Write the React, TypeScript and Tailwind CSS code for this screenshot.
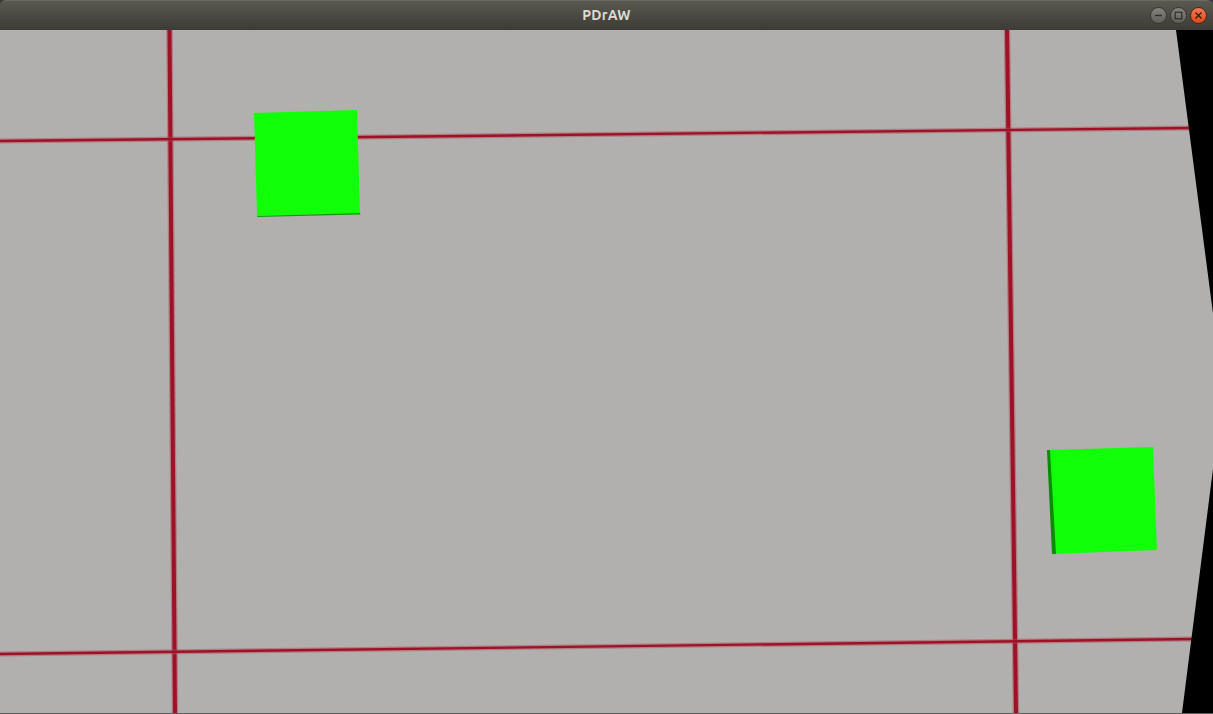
import React from 'react';

const WindowButton: React.FC<{ kind: 'min' | 'max' | 'close' }> = ({ kind }) => {
  const close = kind === 'close';
  return (
    <div
      className={
        close
          ? 'w-[17px] h-[17px] rounded-full flex items-center justify-center bg-gradient-to-b from-[#f37a4e] to-[#dd4814] border border-[#3a2a20]'
          : 'w-[17px] h-[17px] rounded-full flex items-center justify-center bg-gradient-to-b from-[#85847f] to-[#5f5e59] border border-[#36352f]'
      }
    >
      <svg width="9" height="9" viewBox="0 0 9 9">
        {kind === 'min' && <path d="M1 4.5h7" stroke="#2e2d29" strokeWidth="1.3" />}
        {kind === 'max' && <rect x="1.2" y="1.2" width="6.6" height="6.6" fill="none" stroke="#2e2d29" strokeWidth="1.2" />}
        {kind === 'close' && <path d="M1.5 1.5l6 6M7.5 1.5l-6 6" stroke="#3b1a0c" strokeWidth="1.4" />}
      </svg>
    </div>
  );
};

const RedLine: React.FC<{ x1: number; y1: number; x2: number; y2: number; w: number }> = ({ x1, y1, x2, y2, w }) => (
  <g>
    <line x1={x1} y1={y1} x2={x2} y2={y2} stroke="#b04a58" strokeOpacity={0.5} strokeWidth={w + 2.5} />
    <line x1={x1} y1={y1} x2={x2} y2={y2} stroke="#9e1228" strokeWidth={w} />
  </g>
);

const Scene: React.FC = () => (
  <svg width="1213" height="683" viewBox="0 30 1213 683" className="block">
    <rect x="0" y="30" width="1213" height="683" fill="#b1b0af" />
    <RedLine x1={169.5} y1={30} x2={175} y2={713} w={4} />
    <RedLine x1={1007} y1={30} x2={1016} y2={713} w={4} />
    <RedLine x1={0} y1={141} x2={1192} y2={128} w={2.4} />
    <RedLine x1={0} y1={654} x2={1194} y2={639} w={2.4} />

    {/* top-left cube */}
    <polygon points="254,113 357,110 360,213 257,216" fill="#12ff0a" />
    <polygon points="257,216 360,213 360.5,214.5 257.5,217" fill="#0e9c0a" />

    {/* bottom-right cube */}
    <polygon points="1047,450 1153,447 1157,550 1053,554" fill="#12ff0a" />
    <polygon points="1047,450 1050,450 1056,554 1052,554" fill="#0a8c07" />

    {/* black edge on the right */}
    <polygon points="1176,30 1213,30 1213,713 1182,713 1223,390" fill="#000000" />
  </svg>
);

export default function App() {
  return (
    <div className="w-[1213px] h-[714px] flex flex-col bg-[#3c3b37] overflow-hidden">
      <div className="h-[30px] shrink-0 relative flex items-center justify-center rounded-t-[6px] bg-gradient-to-b from-[#5a5951] to-[#3c3b36] border-t border-[#6b6a62]">
        <span className="text-[14px] font-bold text-[#dfdbd2] font-['Ubuntu','DejaVu_Sans',sans-serif] tracking-[0.2px]">PDrAW</span>
        <div className="absolute right-[6px] top-[6px] flex gap-[3px]">
          <WindowButton kind="min" />
          <WindowButton kind="max" />
          <WindowButton kind="close" />
        </div>
      </div>
      <div className="flex-1 overflow-hidden">
        <Scene />
      </div>
      <div className="h-px shrink-0 bg-[#5d5d5d]" />
    </div>
  );
}
